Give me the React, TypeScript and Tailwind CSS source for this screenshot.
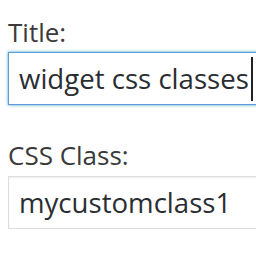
export default function App() {
  return (
    <div
      className="w-[256px] h-[256px] overflow-hidden bg-white pl-[8px] pt-[17px] text-[#2a2e32]"
      style={{ fontFamily: '"Open Sans", "Noto Sans", sans-serif' }}
    >
      <label className="block text-[26px] leading-[30px] text-[#3a3a3a]">Title:</label>
      <div className="mt-[5px] flex h-[53px] w-[320px] items-center border border-[#5b9dd9] pl-[10px] text-[27.6px] shadow-[0_0_3px_rgba(30,140,190,0.8)]">
        <span>widget css classes</span>
        <span className="ml-[2px] h-[44px] w-[2px] bg-[#222]" />
      </div>

      <label className="mt-[35px] block text-[26px] leading-[30px] text-[#3a3a3a]">CSS Class:</label>
      <div className="mt-[6px] flex h-[53px] w-[320px] items-center border border-[#dddddd] pl-[10px] text-[27.6px] shadow-[inset_0_1px_2px_rgba(0,0,0,0.07)]">
        <span>mycustomclass1</span>
      </div>
    </div>
  );
}
